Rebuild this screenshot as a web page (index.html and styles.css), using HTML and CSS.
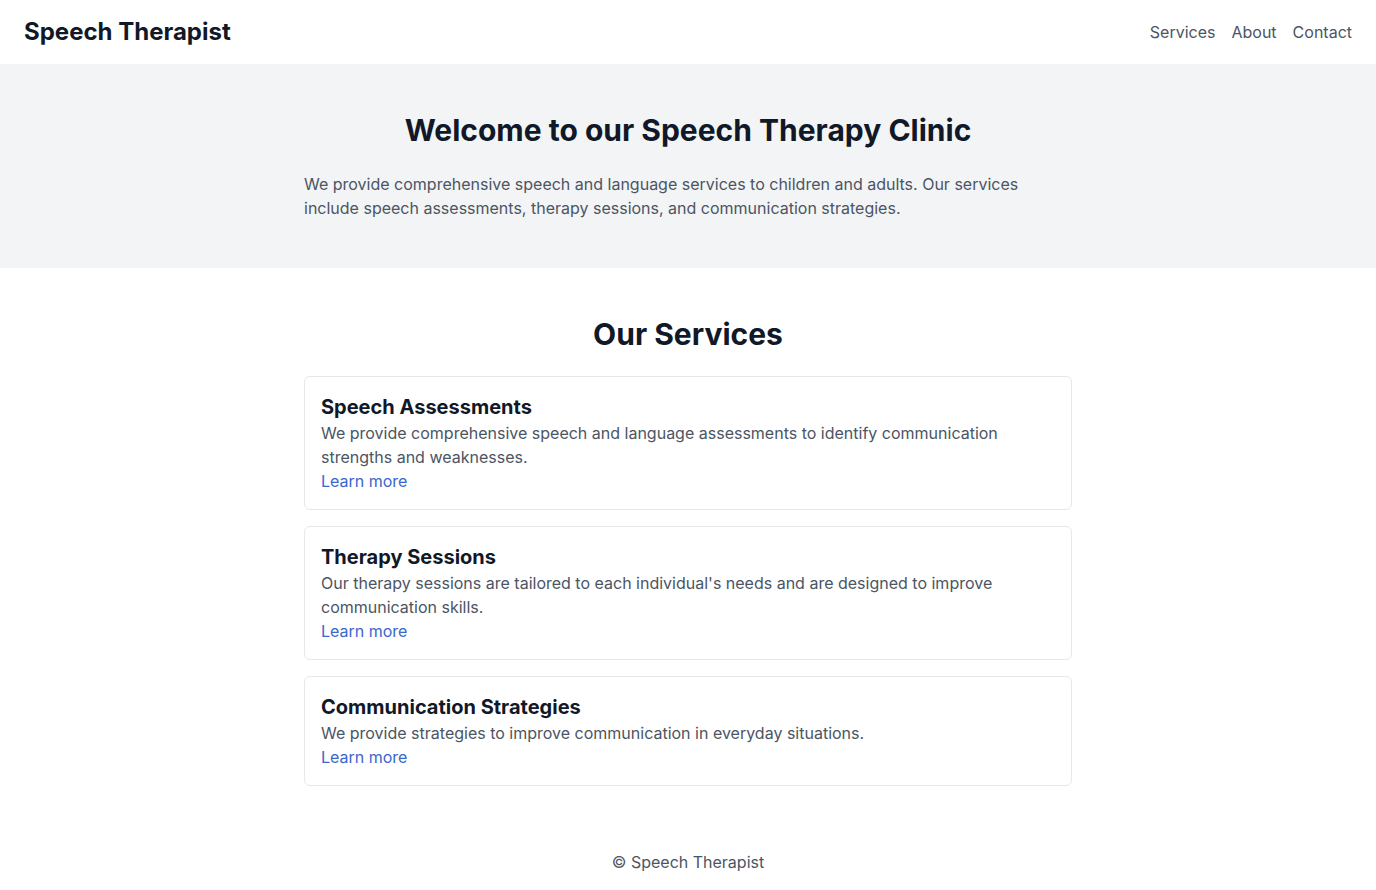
FILE: index.html
```html
<!DOCTYPE html>
<html lang="en">
<head>
<meta charset="utf-8">
<title>Speech Therapist</title>
<link rel="stylesheet" href="styles.css">
</head>
<body>
<header class="site-header">
  <div class="brand">Speech Therapist</div>
  <nav class="nav">
    <a href="#services">Services</a>
    <a href="#about">About</a>
    <a href="#contact">Contact</a>
  </nav>
</header>
<section class="hero">
  <h1>Welcome to our Speech Therapy Clinic</h1>
  <p>We provide comprehensive speech and language services to children and adults. Our services include speech assessments, therapy sessions, and communication strategies.</p>
</section>
<section class="services" id="services">
  <h2>Our Services</h2>
  <div class="cards">
    <div class="card">
      <h3>Speech Assessments</h3>
      <p>We provide comprehensive speech and language assessments to identify communication strengths and weaknesses.</p>
      <a href="#">Learn more</a>
    </div>
    <div class="card">
      <h3>Therapy Sessions</h3>
      <p>Our therapy sessions are tailored to each individual's needs and are designed to improve communication skills.</p>
      <a href="#">Learn more</a>
    </div>
    <div class="card">
      <h3>Communication Strategies</h3>
      <p>We provide strategies to improve communication in everyday situations.</p>
      <a href="#">Learn more</a>
    </div>
  </div>
</section>
<footer class="footer">© Speech Therapist</footer>
</body>
</html>
```
FILE: styles.css
```css
* { box-sizing: border-box; }
html, body { margin: 0; padding: 0; }
body {
  font-family: Inter, "Noto Sans", sans-serif;
  font-size: 16px;
  line-height: 24px;
  color: #111827;
  background: #fff;
}
.site-header {
  height: 64px;
  padding: 0 24px;
  display: flex;
  align-items: center;
  justify-content: space-between;
}
.brand {
  font-size: 24px;
  line-height: 32px;
  font-weight: 700;
  color: #111827;
}
.nav { display: flex; gap: 16px; }
.nav a { color: #4b5563; text-decoration: none; }
.hero {
  background: #f3f4f6;
  padding: 48px 0;
}
.hero h1 {
  margin: 0 0 24px;
  font-size: 30px;
  line-height: 36px;
  font-weight: 700;
  text-align: center;
}
.hero p {
  margin: 0 auto;
  max-width: 768px;
  color: #4b5563;
}
.services {
  padding: 48px 0;
}
.services h2 {
  margin: 0 0 24px;
  font-size: 30px;
  line-height: 36px;
  font-weight: 700;
  text-align: center;
}
.cards {
  max-width: 768px;
  margin: 0 auto;
  display: flex;
  flex-direction: column;
  gap: 16px;
}
.card {
  border: 1px solid #e5e7eb;
  border-radius: 6px;
  padding: 16px;
}
.card h3 {
  margin: 0;
  font-size: 20px;
  line-height: 28px;
  font-weight: 700;
}
.card p { margin: 0; color: #4b5563; }
.card a { color: #3b66cc; text-decoration: none; }
.footer {
  padding: 16px 0;
  text-align: center;
  color: #4b5563;
}
```
